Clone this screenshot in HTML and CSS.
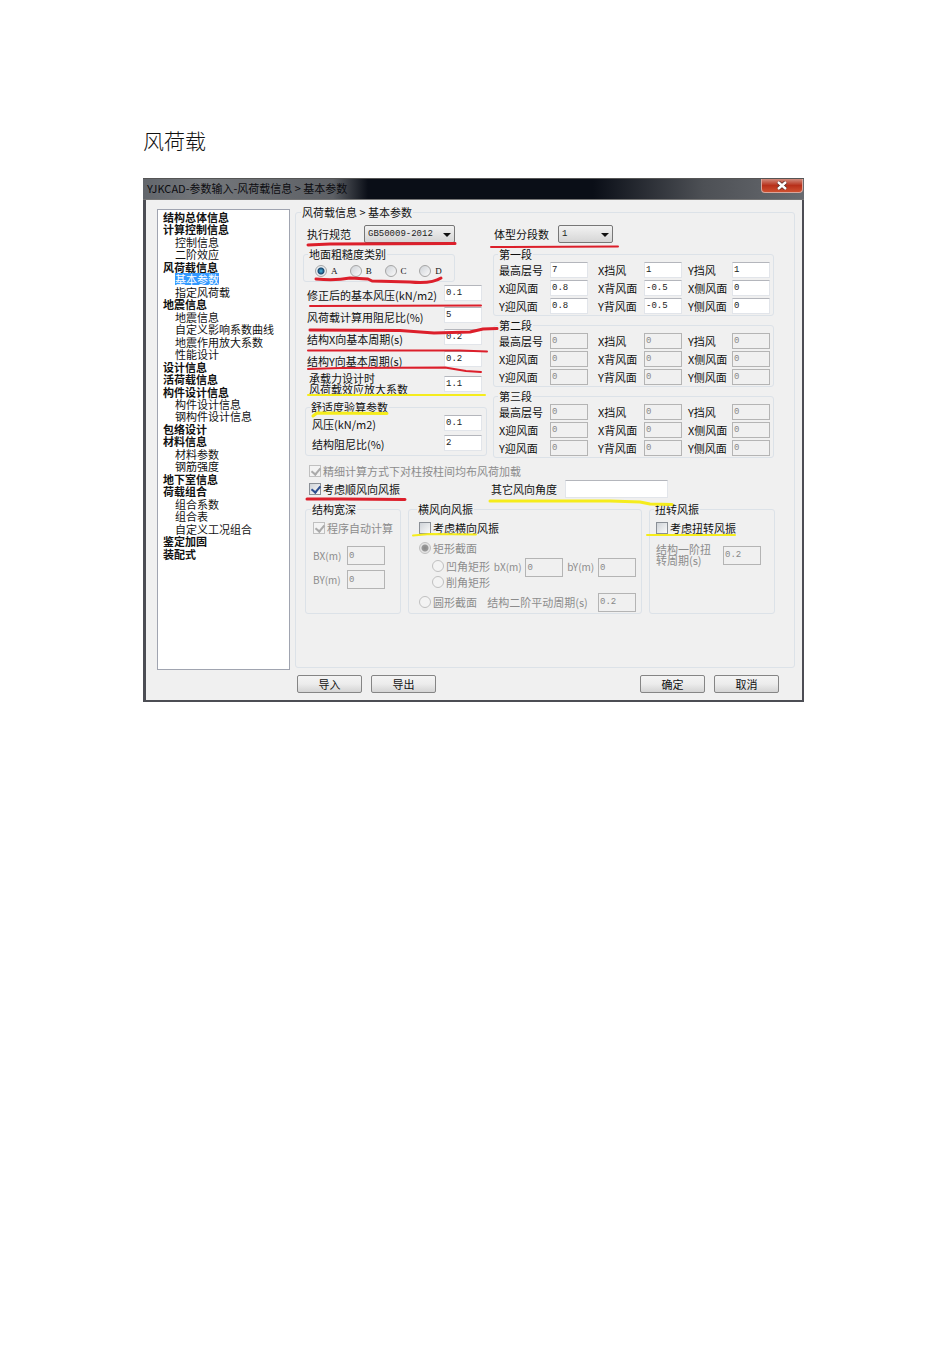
FILE: index.html
```html
<!DOCTYPE html>
<html lang="zh-CN">
<head>
    <meta charset="UTF-8">
    <meta name="viewport" content="width=device-width, initial-scale=1.0">
    <title>风荷载</title>
    <link rel="stylesheet" href="styles.css">
</head>
<body>

<h1>风荷载</h1>

<div class="ventana">
    <div class="titulo">
        <span>YJKCAD-参数输入-风荷载信息 &gt; 基本参数</span>
        <button class="cerrar" aria-label="关闭">
            <svg width="12" height="9" viewBox="0 0 12 9"><path d="M2 1l8 7M10 1l-8 7" stroke="#5a2a25" stroke-width="4"/><path d="M2 1l8 7M10 1l-8 7" stroke="#fff" stroke-width="2.4"/></svg>
        </button>
    </div>

    <div class="cuerpo">
        <ul class="arbol">
            <li class="padre">结构总体信息</li>
            <li class="padre">计算控制信息</li>
            <li>控制信息</li>
            <li>二阶效应</li>
            <li class="padre">风荷载信息</li>
            <li class="activo"><span>基本参数</span></li>
            <li>指定风荷载</li>
            <li class="padre">地震信息</li>
            <li>地震信息</li>
            <li>自定义影响系数曲线</li>
            <li>地震作用放大系数</li>
            <li>性能设计</li>
            <li class="padre">设计信息</li>
            <li class="padre">活荷载信息</li>
            <li class="padre">构件设计信息</li>
            <li>构件设计信息</li>
            <li>钢构件设计信息</li>
            <li class="padre">包络设计</li>
            <li class="padre">材料信息</li>
            <li>材料参数</li>
            <li>钢筋强度</li>
            <li class="padre">地下室信息</li>
            <li class="padre">荷载组合</li>
            <li>组合系数</li>
            <li>组合表</li>
            <li>自定义工况组合</li>
            <li class="padre">鉴定加固</li>
            <li class="padre">装配式</li>
        </ul>

        <fieldset class="panel">
            <legend>风荷载信息 &gt; 基本参数</legend>

            <div class="columnas">
                <div class="izquierda">
                    <div class="linea">
                        <label for="norma">执行规范</label>
                        <span class="combo norma"><select id="norma"><option>GB50009-2012</option></select></span>
                    </div>
                    <fieldset class="rugosidad">
                        <legend>地面粗糙度类别</legend>
                        <div class="clases">
                            <label><input type="radio" name="rug" checked>A</label>
                            <label><input type="radio" name="rug">B</label>
                            <label><input type="radio" name="rug">C</label>
                            <label><input type="radio" name="rug">D</label>
                        </div>
                    </fieldset>
                    <div class="campo"><label for="presion">修正后的基本风压(kN/m2)</label><input type="text" id="presion" value="0.1"></div>
                    <div class="campo"><label for="amort">风荷载计算用阻尼比(%)</label><input type="text" id="amort" value="5"></div>
                    <div class="campo"><label for="perx">结构X向基本周期(s)</label><input type="text" id="perx" value="0.2"></div>
                    <div class="campo"><label for="pery">结构Y向基本周期(s)</label><input type="text" id="pery" value="0.2"></div>
                    <div class="campo doble"><label for="factor">承载力设计时<br>风荷载效应放大系数</label><input type="text" id="factor" value="1.1"></div>
                    <fieldset class="confort">
                        <legend>舒适度验算参数</legend>
                        <div class="campo"><label for="cpres">风压(kN/m2)</label><input type="text" id="cpres" value="0.1"></div>
                        <div class="campo"><label for="camort">结构阻尼比(%)</label><input type="text" id="camort" value="2"></div>
                    </fieldset>
                </div>

                <div class="derecha">
                    <div class="linea">
                        <label for="tramos">体型分段数</label>
                        <span class="combo tramos"><select id="tramos"><option>1</option></select></span>
                    </div>
                    <fieldset class="tramo">
                        <legend>第一段</legend>
                        <label for="a1">最高层号</label><input type="text" id="a1" value="7">
                        <label for="a2">X挡风</label><input type="text" id="a2" value="1">
                        <label for="a3">Y挡风</label><input type="text" id="a3" value="1">
                        <label for="a4">X迎风面</label><input type="text" id="a4" value="0.8">
                        <label for="a5">X背风面</label><input type="text" id="a5" value="-0.5">
                        <label for="a6">X侧风面</label><input type="text" id="a6" value="0">
                        <label for="a7">Y迎风面</label><input type="text" id="a7" value="0.8">
                        <label for="a8">Y背风面</label><input type="text" id="a8" value="-0.5">
                        <label for="a9">Y侧风面</label><input type="text" id="a9" value="0">
                    </fieldset>
                    <fieldset class="tramo">
                        <legend>第二段</legend>
                        <label for="b1">最高层号</label><input type="text" id="b1" value="0" disabled>
                        <label for="b2">X挡风</label><input type="text" id="b2" value="0" disabled>
                        <label for="b3">Y挡风</label><input type="text" id="b3" value="0" disabled>
                        <label for="b4">X迎风面</label><input type="text" id="b4" value="0" disabled>
                        <label for="b5">X背风面</label><input type="text" id="b5" value="0" disabled>
                        <label for="b6">X侧风面</label><input type="text" id="b6" value="0" disabled>
                        <label for="b7">Y迎风面</label><input type="text" id="b7" value="0" disabled>
                        <label for="b8">Y背风面</label><input type="text" id="b8" value="0" disabled>
                        <label for="b9">Y侧风面</label><input type="text" id="b9" value="0" disabled>
                    </fieldset>
                    <fieldset class="tramo">
                        <legend>第三段</legend>
                        <label for="c1">最高层号</label><input type="text" id="c1" value="0" disabled>
                        <label for="c2">X挡风</label><input type="text" id="c2" value="0" disabled>
                        <label for="c3">Y挡风</label><input type="text" id="c3" value="0" disabled>
                        <label for="c4">X迎风面</label><input type="text" id="c4" value="0" disabled>
                        <label for="c5">X背风面</label><input type="text" id="c5" value="0" disabled>
                        <label for="c6">X侧风面</label><input type="text" id="c6" value="0" disabled>
                        <label for="c7">Y迎风面</label><input type="text" id="c7" value="0" disabled>
                        <label for="c8">Y背风面</label><input type="text" id="c8" value="0" disabled>
                        <label for="c9">Y侧风面</label><input type="text" id="c9" value="0" disabled>
                    </fieldset>
                </div>
            </div>

            <div class="opciones">
                <label class="gris"><input type="checkbox" checked disabled>精细计算方式下对柱按柱间均布风荷加载</label>
            </div>
            <div class="opciones">
                <label class="vibra"><input type="checkbox" checked>考虑顺风向风振</label>
                <label for="angulo">其它风向角度</label>
                <input type="text" id="angulo" class="angulo">
            </div>

            <div class="grupos">
                <fieldset class="ancho">
                    <legend>结构宽深</legend>
                    <label class="marca gris"><input type="checkbox" checked disabled>程序自动计算</label>
                    <div class="par gris"><label for="bx">BX(m)</label><input type="text" id="bx" value="0" disabled></div>
                    <div class="par gris"><label for="by">BY(m)</label><input type="text" id="by" value="0" disabled></div>
                </fieldset>
                <fieldset class="transversal">
                    <legend>横风向风振</legend>
                    <label class="marca"><input type="checkbox">考虑横向风振</label>
                    <label class="marca gris"><input type="radio" name="sec" checked disabled>矩形截面</label>
                    <div class="esquinas gris">
                        <div>
                            <label class="marca"><input type="radio" name="esq" disabled>凹角矩形</label>
                            <label class="marca"><input type="radio" name="esq" disabled>削角矩形</label>
                        </div>
                        <label for="cbx">bX(m)</label><input type="text" id="cbx" value="0" disabled>
                        <label for="cby">bY(m)</label><input type="text" id="cby" value="0" disabled>
                    </div>
                    <div class="circular gris">
                        <label class="marca"><input type="radio" name="sec" disabled>圆形截面</label>
                        <label for="per2">结构二阶平动周期(s)</label><input type="text" id="per2" value="0.2" disabled>
                    </div>
                </fieldset>
                <fieldset class="torsion">
                    <legend>扭转风振</legend>
                    <label class="marca"><input type="checkbox">考虑扭转风振</label>
                    <div class="par gris"><label for="per1">结构一阶扭<br>转周期(s)</label><input type="text" id="per1" value="0.2" disabled></div>
                </fieldset>
            </div>
        </fieldset>
    </div>

    <div class="botones">
        <button>导入</button>
        <button>导出</button>
        <button class="aceptar">确定</button>
        <button>取消</button>
    </div>

    <!-- subrayados a mano -->
    <svg class="trazos" width="661" height="524" viewBox="143 178 661 524">
        <g class="rojo">
            <path d="M308 245L330 244L455 243.500" stroke-width="3"/>
            <path d="M491 247L618 246.500"/>
            <path d="M316 279Q335 281 350 278L368 279L372 281L410 282Q432 284 441 278" stroke-width="3"/>
            <path d="M310 306L481 305.500"/>
            <path d="M310 330L400 330.500L434 333L470 332L483 329L497 328.500" stroke-width="3"/>
            <path d="M308 350.500L460 350.500L487 351.500"/>
            <path d="M308 369L340 368L445 367.500L466 371L481 372"/>
            <path d="M307 499L340 499L405 499.500" stroke-width="3"/>
        </g>
        <g class="amarillo">
            <path d="M308 395L485 395"/>
            <path d="M313 416L317 413L387 413.500" stroke-width="3"/>
            <path d="M490 501L610 501L640 502L650 504L672 504.500" stroke-width="3"/>
            <path d="M413 535.500L430 534L476 534.500"/>
            <path d="M647 535L735 535"/>
        </g>
    </svg>
</div>

</body>
</html>
```
FILE: styles.css
```css
* {
    box-sizing: border-box;
}
body {
    margin: 0;
    padding: 125px 146px 40px 143px;
    background-color: #fff;
    color: #111;
    font-family: "Noto Sans CJK SC", sans-serif;
    font-size: 11px;
    line-height: 12px;
}
h1 {
    margin: 0 0 23px;
    font-size: 21px;
    font-weight: 300;
    line-height: 30px;
}
fieldset {
    margin: 0;
    padding: 0;
    min-width: 0;
    border: 1px solid #dce2e8;
    border-radius: 3px;
}
legend {
    padding: 0 1px;
    margin-left: 4px;
    white-space: nowrap;
}
label {
    white-space: nowrap;
}

/* ventana */
.ventana {
    position: relative;
    border: solid #4c4d54;
    border-width: 0 2px 2px 3px;
    background-color: #f0f0f0;
}
.titulo {
    display: flex;
    justify-content: space-between;
    align-items: flex-start;
    height: 22px;
    margin: 0 -2px 0 -3px;
    padding-left: 4px;
    border-top: 1px solid #555;
    border-bottom: 1px solid #777;
    background: linear-gradient(90deg, #62666c 0, #74777b 60px, #5d6065 190px, #0a0e17 225px, #0a0e17 450px, #4d5055 560px, #686b70 100%);
    color: #0c0c10;
    line-height: 18px;
}
.cerrar {
    width: 42px;
    height: 14px;
    margin-right: 1px;
    padding: 0;
    border: 1px solid #d9a69c;
    border-top: 0;
    border-radius: 0 0 4px 4px;
    background: linear-gradient(#d08a7c, #b8301a 50%, #cf5030);
    line-height: 9px;
}
.cuerpo {
    display: flex;
    gap: 5px;
    padding: 6px 7px 0 11px;
}
.arbol {
    display: grid;
    align-content: start;
    grid-template-rows: repeat(28, minmax(0, 1fr));
    flex: none;
    width: 133px;
    margin: 3px 0 0;
    padding: 1px 0 109px 5px;
    height: 461px;
    border: 1px solid #a0a4b0;
    background-color: #fff;
    list-style: none;
}
.arbol li {
    padding-left: 12px;
    white-space: nowrap;
}
.arbol .padre {
    padding-left: 0;
    font-weight: bold;
}
.activo span {
    display: inline-block;
    background-color: #3399ff;
    color: #fff;
}

/* panel principal */
.panel {
    flex: 1;
    margin-bottom: 2px;
    padding: 0 0 48px 7px;
}
.panel > legend {
    margin-left: -2px;
}
.columnas {
    display: flex;
    gap: 6px;
}
.izquierda {
    width: 184px;
}
.derecha {
    width: 281px;
}
.linea {
    display: flex;
    align-items: center;
    height: 30px;
    padding: 2px 0 0 4px;
}
.derecha .linea {
    padding-left: 1px;
}
.linea label {
    width: 57px;
}
.derecha .linea label {
    width: 64px;
}
.combo {
    position: relative;
    height: 18px;
}
.norma {
    width: 91px;
}
.tramos {
    width: 55px;
}
.combo select {
    display: block;
    width: 100%;
    height: 18px;
    padding: 0 3px;
    appearance: none;
    border: 1px solid #777;
    border-radius: 2px;
    background: linear-gradient(#f2f2f2, #d6d6d6);
    color: #222;
    font: 9px/14px "Liberation Mono", monospace;
}
.combo::after {
    content: "";
    position: absolute;
    right: 4px;
    top: 8px;
    border: 4px solid transparent;
    border-top-color: #111;
    border-bottom: 0;
    pointer-events: none;
}
input[type="text"] {
    width: 38px;
    height: 16px;
    padding: 0 1px;
    border: 1px solid #e2e5ea;
    border-top-color: #b4b6bc;
    border-radius: 0;
    background-color: #fff;
    color: #222;
    font: 9px/12px "Liberation Mono", monospace;
}
input[type="text"]:disabled {
    border-color: #b4b4b4;
    background-color: #f0f0f0;
    color: #888;
}
input[type="checkbox"],
input[type="radio"] {
    flex: none;
    width: 12px;
    height: 12px;
    margin: 0 2px 0 0;
    appearance: none;
    border: 1px solid #8a8f96;
    background: linear-gradient(135deg, #cfd3d8, #fafafa);
}
input[type="radio"] {
    border-color: #a5a5a5;
    border-radius: 50%;
}
input[type="radio"]:checked {
    background: radial-gradient(circle, #49b7e0 0, #17456e 3px, #e8eef2 4px);
}
input[type="checkbox"]:checked::after {
    content: "";
    display: block;
    width: 4px;
    height: 7px;
    margin: 0 0 0 3px;
    border: solid #2f4f8f;
    border-width: 0 2px 2px 0;
    transform: rotate(40deg);
}
input[type="checkbox"]:disabled,
input[type="radio"]:disabled {
    border-color: #c0c0c0;
    background: #f3f3f3;
}
input[type="radio"]:checked:disabled {
    background: radial-gradient(circle, #888 0, #999 3px, #e4e4e4 4px);
}
input[type="checkbox"]:disabled::after {
    border-color: #aaa;
}
.gris {
    color: #8c8c8c;
}
.rugosidad {
    width: 152px;
    height: 34px;
}
.clases {
    display: flex;
    padding: 5px 0 0 11px;
}
.clases label {
    display: flex;
    align-items: center;
    width: 35px;
    font: 9px/12px "Liberation Serif", serif;
}
.clases input {
    margin-right: 4px;
}
.campo {
    display: flex;
    justify-content: space-between;
    align-items: center;
    height: 22px;
    padding: 0 5px 0 4px;
}
.campo label {
    padding-top: 4px;
}
.doble {
    height: 27px;
}
.doble label {
    padding: 0 0 0 2px;
    line-height: 11px;
}
.confort {
    margin: 4px 0 0 2px;
    padding-bottom: 2px;
}
.confort .campo {
    height: 20px;
    padding: 0 4px 0 6px;
}
.confort .campo label {
    padding-top: 2px;
}
.tramo {
    display: grid;
    grid-template-columns: 51px 48px 46px 44px 44px 38px;
    grid-auto-rows: 16px;
    gap: 2px 0;
    align-items: center;
    padding: 2px 0 1px 5px;
}
.tramo legend {
    margin-left: -1px;
}
.tramo + .tramo {
    margin-top: 3px;
}

/* opciones inferiores */
.opciones {
    display: flex;
    align-items: center;
    height: 18px;
    padding-left: 6px;
}
.columnas + .opciones {
    margin-top: 4px;
}
.opciones label,
.marca {
    display: flex;
    align-items: center;
}
.vibra {
    width: 182px;
}
.opciones .angulo {
    width: 103px;
    height: 18px;
    margin-left: 8px;
}
.grupos {
    display: flex;
    gap: 7px;
    margin: 5px 19px 0 2px;
}
.grupos fieldset {
    height: 111px;
}
.grupos legend {
    margin-left: -2px;
}
.grupos .marca {
    height: 20px;
}
.grupos input[type="text"] {
    height: 19px;
}
.ancho {
    width: 96px;
    padding: 3px 0 0 7px;
}
.par {
    display: flex;
    align-items: center;
    justify-content: space-between;
    padding-right: 15px;
    margin-bottom: 5px;
}
.ancho .marca {
    margin-bottom: 8px;
}
.ancho .par label,
.esquinas > label {
    font-size: 10px;
}
.transversal {
    width: 234px;
    padding: 3px 5px 0 10px;
}
.esquinas {
    display: flex;
    justify-content: space-between;
    padding-left: 13px;
}
.esquinas > label {
    line-height: 18px;
}
.grupos .esquinas .marca {
    height: 16px;
}
.circular {
    display: flex;
    align-items: center;
    justify-content: space-between;
    padding-top: 2px;
}
.torsion {
    flex: 1;
    padding: 3px 0 0 6px;
}
.torsion .marca {
    margin-bottom: 6px;
}
.torsion .par {
    padding-right: 13px;
}
.torsion .par label {
    line-height: 11px;
}

/* botones */
.botones {
    display: flex;
    gap: 9px;
    padding: 5px 23px 7px 151px;
}
.botones button {
    width: 65px;
    height: 18px;
    padding: 0;
    border: 1px solid #858585;
    border-radius: 2px;
    background: linear-gradient(#f4f4f4 0, #ececec 50%, #d4d4d4 100%);
    color: #111;
    font: 11px/14px "Noto Sans CJK SC", sans-serif;
}
.botones .aceptar {
    margin-left: auto;
}

.trazos {
    position: absolute;
    top: 0;
    left: -3px;
    pointer-events: none;
    fill: none;
    stroke-width: 2;
    stroke-linecap: round;
    stroke-linejoin: round;
}
.rojo {
    stroke: #dc1f2b;
}
.amarillo {
    stroke: #f5ec1c;
}
```
